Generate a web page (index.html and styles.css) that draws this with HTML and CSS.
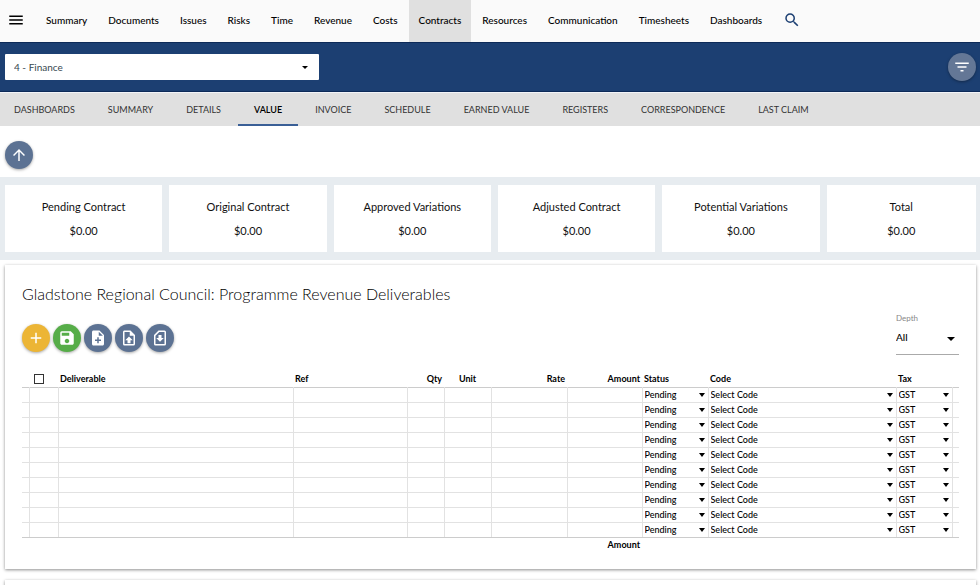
FILE: index.html
```html
<!DOCTYPE html>
<html lang="en">
<head>
    <title>Contracts - Value</title>
    <meta name="viewport" content="width=device-width, initial-scale=1">
    <meta charset="UTF-8">
    <link rel="stylesheet" href="styles.css">
</head>
<body>
    <nav class="topnav">
        <button type="button" class="icon-button menu-button" aria-label="Menu">
            <svg viewBox="0 0 24 24"><path d="M3 18h18v-2H3v2zm0-5h18v-2H3v2zm0-7v2h18V6H3z"/></svg>
        </button>
        <a href="#">Summary</a>
        <a href="#">Documents</a>
        <a href="#">Issues</a>
        <a href="#">Risks</a>
        <a href="#">Time</a>
        <a href="#">Revenue</a>
        <a href="#">Costs</a>
        <a href="#" class="active">Contracts</a>
        <a href="#">Resources</a>
        <a href="#">Communication</a>
        <a href="#">Timesheets</a>
        <a href="#">Dashboards</a>
        <button type="button" class="icon-button search-button" aria-label="Search">
            <svg viewBox="0 0 24 24"><path d="M15.5 14h-.79l-.28-.27A6.47 6.47 0 0 0 16 9.5 6.5 6.5 0 1 0 9.5 16c1.61 0 3.09-.59 4.23-1.57l.27.28v.79l5 4.99L20.49 19l-4.99-5zm-6 0C7.01 14 5 11.99 5 9.5S7.01 5 9.5 5 14 7.01 14 9.5 11.99 14 9.5 14z"/></svg>
        </button>
    </nav>

    <header class="project-bar">
        <div class="select project-select">
            <select aria-label="Project"><option>4 - Finance</option></select>
        </div>
        <button type="button" class="round filter" aria-label="Filter">
            <svg viewBox="0 0 24 24"><path d="M10 18h4v-2h-4v2zM3 6v2h18V6H3zm3 7h12v-2H6v2z"/></svg>
        </button>
    </header>

    <nav class="tabs">
        <a href="#">DASHBOARDS</a>
        <a href="#">SUMMARY</a>
        <a href="#">DETAILS</a>
        <a href="#" class="active">VALUE</a>
        <a href="#">INVOICE</a>
        <a href="#">SCHEDULE</a>
        <a href="#">EARNED VALUE</a>
        <a href="#">REGISTERS</a>
        <a href="#">CORRESPONDENCE</a>
        <a href="#">LAST CLAIM</a>
    </nav>

    <div class="toolbar">
        <button type="button" class="round" aria-label="Up">
            <svg viewBox="0 0 24 24"><path d="M4 12l1.41 1.41L11 7.83V20h2V7.83l5.58 5.59L20 12l-8-8-8 8z"/></svg>
        </button>
    </div>

    <section class="totals">
        <div class="total"><span>Pending Contract</span><span>$0.00</span></div>
        <div class="total"><span>Original Contract</span><span>$0.00</span></div>
        <div class="total"><span>Approved Variations</span><span>$0.00</span></div>
        <div class="total"><span>Adjusted Contract</span><span>$0.00</span></div>
        <div class="total"><span>Potential Variations</span><span>$0.00</span></div>
        <div class="total"><span>Total</span><span>$0.00</span></div>
    </section>

    <main class="card">
        <h1>Gladstone Regional Council: Programme Revenue Deliverables</h1>

        <div class="card-tools">
            <div class="actions">
                <button type="button" class="round add" aria-label="Add">
                    <svg viewBox="0 0 24 24"><path d="M19 13h-6v6h-2v-6H5v-2h6V5h2v6h6v2z"/></svg>
                </button>
                <button type="button" class="round save" aria-label="Save">
                    <svg viewBox="0 0 24 24"><path d="M17 3H5a2 2 0 0 0-2 2v14c0 1.1.9 2 2 2h14c1.1 0 2-.9 2-2V7l-4-4zm-5 16c-1.66 0-3-1.34-3-3s1.34-3 3-3 3 1.34 3 3-1.34 3-3 3zm3-10H5V5h10v4z"/></svg>
                </button>
                <button type="button" class="round" aria-label="Add file">
                    <svg viewBox="0 0 24 24"><path d="M14 2H6c-1.1 0-2 .9-2 2v16c0 1.1.9 2 2 2h12c1.1 0 2-.9 2-2V8l-6-6zm2 14h-3v3h-2v-3H8v-2h3v-3h2v3h3v2zm-3-7V3.5L18.500 9H13z"/></svg>
                </button>
                <button type="button" class="round" aria-label="Import">
                    <svg viewBox="0 0 24 24"><path fill-rule="evenodd" d="M6 2h8l6 6v12a2 2 0 0 1-2 2H6a2 2 0 0 1-2-2V4c0-1.1.9-2 2-2zm0 2v16h12V9h-5V4H6zm6 6l5 5h-3v4h-4v-4H7l5-5z"/></svg>
                </button>
                <button type="button" class="round" aria-label="Export">
                    <svg viewBox="0 0 24 24"><path fill-rule="evenodd" d="M10 2h8a2 2 0 0 1 2 2v16a2 2 0 0 1-2 2H6a2 2 0 0 1-2-2V8l6-6zm1 2L6 9v11h12V4h-7zm-1 4h4v4h3l-5 5-5-5h3V8z"/></svg>
                </button>
            </div>
            <div class="depth">
                <label for="depth">Depth</label>
                <div class="select">
                    <select id="depth"><option>All</option></select>
                </div>
            </div>
        </div>

        <table class="grid">
            <colgroup>
                <col class="c-edge"><col class="c-check"><col class="c-deliverable"><col class="c-ref">
                <col class="c-qty"><col class="c-unit"><col class="c-rate"><col class="c-amount">
                <col class="c-status"><col class="c-code"><col class="c-tax"><col class="c-edge">
            </colgroup>
            <thead>
                <tr>
                    <th></th>
                    <th><input type="checkbox" aria-label="Select all"></th>
                    <th>Deliverable</th>
                    <th>Ref</th>
                    <th class="right">Qty</th>
                    <th class="center">Unit</th>
                    <th class="right">Rate</th>
                    <th class="right">Amount</th>
                    <th>Status</th>
                    <th>Code</th>
                    <th>Tax</th>
                    <th></th>
                </tr>
            </thead>
            <tbody>
                <tr>
                    <td></td><td></td><td></td><td></td><td></td><td></td><td></td><td></td>
                    <td><div class="select"><select aria-label="Status"><option>Pending</option></select></div></td>
                    <td><div class="select"><select aria-label="Code"><option>Select Code</option></select></div></td>
                    <td><div class="select"><select aria-label="Tax"><option>GST</option></select></div></td>
                    <td></td>
                </tr>
                <tr>
                    <td></td><td></td><td></td><td></td><td></td><td></td><td></td><td></td>
                    <td><div class="select"><select aria-label="Status"><option>Pending</option></select></div></td>
                    <td><div class="select"><select aria-label="Code"><option>Select Code</option></select></div></td>
                    <td><div class="select"><select aria-label="Tax"><option>GST</option></select></div></td>
                    <td></td>
                </tr>
                <tr>
                    <td></td><td></td><td></td><td></td><td></td><td></td><td></td><td></td>
                    <td><div class="select"><select aria-label="Status"><option>Pending</option></select></div></td>
                    <td><div class="select"><select aria-label="Code"><option>Select Code</option></select></div></td>
                    <td><div class="select"><select aria-label="Tax"><option>GST</option></select></div></td>
                    <td></td>
                </tr>
                <tr>
                    <td></td><td></td><td></td><td></td><td></td><td></td><td></td><td></td>
                    <td><div class="select"><select aria-label="Status"><option>Pending</option></select></div></td>
                    <td><div class="select"><select aria-label="Code"><option>Select Code</option></select></div></td>
                    <td><div class="select"><select aria-label="Tax"><option>GST</option></select></div></td>
                    <td></td>
                </tr>
                <tr>
                    <td></td><td></td><td></td><td></td><td></td><td></td><td></td><td></td>
                    <td><div class="select"><select aria-label="Status"><option>Pending</option></select></div></td>
                    <td><div class="select"><select aria-label="Code"><option>Select Code</option></select></div></td>
                    <td><div class="select"><select aria-label="Tax"><option>GST</option></select></div></td>
                    <td></td>
                </tr>
                <tr>
                    <td></td><td></td><td></td><td></td><td></td><td></td><td></td><td></td>
                    <td><div class="select"><select aria-label="Status"><option>Pending</option></select></div></td>
                    <td><div class="select"><select aria-label="Code"><option>Select Code</option></select></div></td>
                    <td><div class="select"><select aria-label="Tax"><option>GST</option></select></div></td>
                    <td></td>
                </tr>
                <tr>
                    <td></td><td></td><td></td><td></td><td></td><td></td><td></td><td></td>
                    <td><div class="select"><select aria-label="Status"><option>Pending</option></select></div></td>
                    <td><div class="select"><select aria-label="Code"><option>Select Code</option></select></div></td>
                    <td><div class="select"><select aria-label="Tax"><option>GST</option></select></div></td>
                    <td></td>
                </tr>
                <tr>
                    <td></td><td></td><td></td><td></td><td></td><td></td><td></td><td></td>
                    <td><div class="select"><select aria-label="Status"><option>Pending</option></select></div></td>
                    <td><div class="select"><select aria-label="Code"><option>Select Code</option></select></div></td>
                    <td><div class="select"><select aria-label="Tax"><option>GST</option></select></div></td>
                    <td></td>
                </tr>
                <tr>
                    <td></td><td></td><td></td><td></td><td></td><td></td><td></td><td></td>
                    <td><div class="select"><select aria-label="Status"><option>Pending</option></select></div></td>
                    <td><div class="select"><select aria-label="Code"><option>Select Code</option></select></div></td>
                    <td><div class="select"><select aria-label="Tax"><option>GST</option></select></div></td>
                    <td></td>
                </tr>
                <tr>
                    <td></td><td></td><td></td><td></td><td></td><td></td><td></td><td></td>
                    <td><div class="select"><select aria-label="Status"><option>Pending</option></select></div></td>
                    <td><div class="select"><select aria-label="Code"><option>Select Code</option></select></div></td>
                    <td><div class="select"><select aria-label="Tax"><option>GST</option></select></div></td>
                    <td></td>
                </tr>
            </tbody>
            <tfoot>
                <tr>
                    <td colspan="8" class="right">Amount</td>
                    <td colspan="4"></td>
                </tr>
            </tfoot>
        </table>
    </main>

    <section class="card next-card"></section>
</body>
</html>
```

FILE: styles.css
```css
* {
    box-sizing: border-box;
}

html {
    scrollbar-width: none;
}

body {
    font-family: Lato, "Open Sans", sans-serif;
    font-size: 11px;
    margin: 0;
    color: #111;
    background: #fff;
}

a {
    color: inherit;
    text-decoration: none;
}

button {
    border: none;
    padding: 0;
    cursor: pointer;
}

svg {
    display: block;
    width: 18px;
    height: 18px;
    fill: currentColor;
}

/* top navigation */
.topnav {
    display: flex;
    gap: 1px;
    height: 42px;
    background: #fafafa;
    font-size: 10px;
    font-weight: 500;
    color: #000;
}

.topnav a {
    padding: 0 10px;
    line-height: 40px;
}

.topnav .active {
    background: #e0e0e0;
}

.icon-button {
    background: none;
}

.menu-button {
    padding: 0 10px 3px 7px;
    color: #000;
}

.search-button {
    padding: 0 10px 3px 10px;
    color: #1c3f72;
}

/* blue bar */
.project-bar {
    display: flex;
    justify-content: space-between;
    align-items: center;
    height: 50px;
    padding: 0 4px 0 5px;
    background: #1c3f72;
    border-top: 1px solid #0d2a58;
    border-bottom: 1px solid #0d2a58;
}

.select {
    position: relative;
}

.select::after {
    content: "";
    position: absolute;
    top: 50%;
    right: 1px;
    margin-top: -2px;
    border: 3px solid transparent;
    border-top: 4px solid #000;
    border-bottom: none;
    pointer-events: none;
}

select {
    display: block;
    width: 100%;
    appearance: none;
    border: none;
    border-radius: 0;
    background: transparent;
    font: inherit;
    color: inherit;
}

.project-select {
    width: 314px;
    font-size: 10px;
    color: #37474f;
}

.project-select::after {
    right: 11px;
    margin-top: -1px;
    border-top-width: 3px;
}

.project-select select {
    height: 26px;
    padding: 0 9px;
    background: #fff;
    border-radius: 1px;
}

.round {
    display: flex;
    align-items: center;
    justify-content: center;
    width: 28px;
    height: 28px;
    border-radius: 50%;
    background: #5c7293;
    color: #fff;
    box-shadow: 0 1px 3px rgba(0,0,0,0.35);
}

.filter {
    background: #647796;
}

.add {
    background: #ecb535;
}

.save {
    background: #56ad48;
}

/* tabs */
.tabs {
    display: flex;
    gap: 1px;
    height: 34px;
    background: #e0e0e0;
    border-top: 1px solid #f2f4f8;
    font-size: 9px;
    color: #333;
}

.tabs a {
    padding: 0 16px;
    line-height: 33px;
    border-bottom: 2px solid transparent;
}

.tabs a:first-child {
    padding-left: 14px;
}

.tabs .active {
    color: #000;
    font-weight: 600;
    border-bottom-color: #3a5f96;
}

.toolbar {
    padding: 15px 5px 8px;
}

/* contract totals */
.totals {
    display: grid;
    grid-template-columns: repeat(5, 20fr) 19fr;
    gap: 7px;
    padding: 8px 4px 8px 5px;
    background: #e7ecf0;
}

.total {
    display: flex;
    flex-direction: column;
    align-items: center;
    gap: 8px;
    padding: 14px 0 13px;
    line-height: 16px;
    background: #fff;
}

/* deliverables */
.card {
    margin: 5px 4px 0 5px;
    padding: 19px 17px 17px;
    background: #fff;
    box-shadow: 0 1px 3px rgba(0,0,0,0.45);
}

h1 {
    margin: 0;
    font-size: 16px;
    font-weight: 300;
    line-height: 20px;
    color: #000;
}

.card-tools {
    display: flex;
    justify-content: space-between;
    align-items: flex-start;
}

.actions {
    display: flex;
    gap: 3px;
    margin-top: 20px;
}

.depth {
    width: 63px;
    margin-top: 8px;
}

.depth label {
    display: block;
    font-size: 8px;
    line-height: 12px;
    color: #888;
}

.depth select {
    height: 31px;
    padding: 0 0 4px;
    border-bottom: 1px solid #aaa;
    font-size: 10px;
    font-weight: 500;
    color: #000;
}

.depth .select::after {
    right: 4px;
    margin-top: -3px;
    border-width: 4px;
    border-bottom: none;
}

.grid {
    width: 100%;
    margin-top: 17px;
    table-layout: fixed;
    border-collapse: collapse;
    font-size: 9px;
    color: #000;
}

.c-edge { width: 7px; }
.c-check { width: 29px; }
.c-ref { width: 114px; }
.c-qty { width: 37px; }
.c-unit { width: 47px; }
.c-rate { width: 76px; }
.c-amount { width: 75px; }
.c-status { width: 66px; }
.c-code { width: 188px; }
.c-tax { width: 56px; }

.grid th,
.grid td {
    height: 15px;
    padding: 0 2px;
    line-height: 14px;
    text-align: left;
}

.grid th,
.grid tfoot td {
    font-weight: bold;
}

.grid .right {
    text-align: right;
}

.grid .center {
    text-align: center;
}

.grid input {
    display: block;
    appearance: none;
    width: 10px;
    height: 10px;
    margin: 0 3px;
    border: 1px solid #333;
}

.grid tbody {
    border-top: 1px solid #ccc;
    border-bottom: 1px solid #ccc;
}

.grid tbody td {
    border-right: 1px solid #e2e2e2;
    border-bottom: 1px solid #e2e2e2;
}

.grid tbody tr:last-child td {
    border-bottom-color: #ccc;
}

.grid tbody td:last-child {
    border-right: none;
}

.grid tbody select {
    height: 14px;
    padding: 0;
    font-weight: 500;
}

.next-card {
    margin-top: 11px;
}
```
